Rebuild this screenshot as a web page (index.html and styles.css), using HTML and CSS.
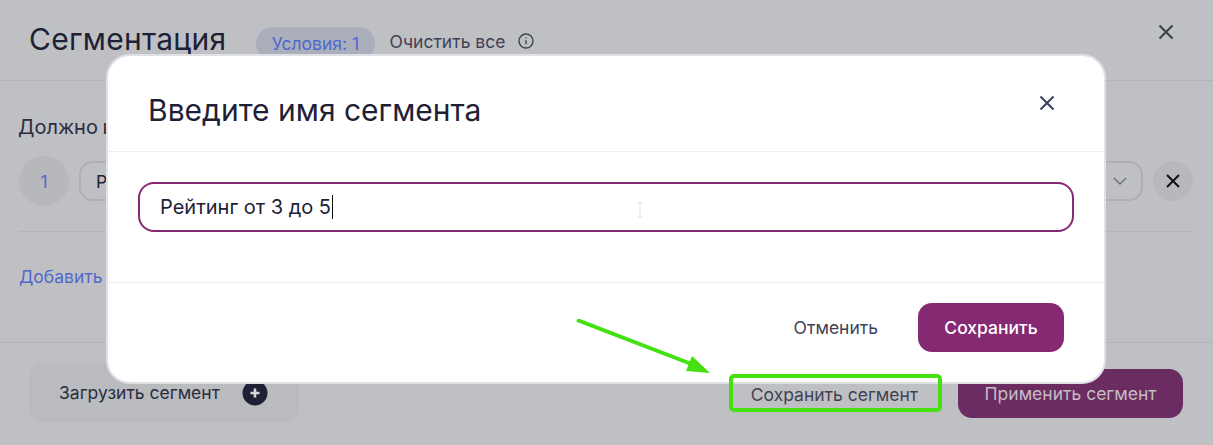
FILE: index.html
```html
<!DOCTYPE html>
<html lang="ru">
<head>
<meta charset="utf-8">
<title>Сегментация</title>
<link rel="stylesheet" href="styles.css">
</head>
<body>
<div class="page">
  <header class="top">
    <h1 class="top-title">Сегментация</h1>
    <span class="pill">Условия: 1</span>
    <span class="clear">Очистить все</span>
    <svg class="info" width="16" height="16" viewBox="0 0 16 16" fill="none" stroke="#3f4254" stroke-width="1.4"><circle cx="8" cy="8" r="7"/><path d="M8 7.2v4" /><path d="M8 4.4v1.2"/></svg>
    <svg class="top-close" width="16" height="16" viewBox="0 0 16 16" fill="none" stroke="#3f4254" stroke-width="2.2"><path d="M1.5 1.5l13 13M14.5 1.5l-13 13"/></svg>
  </header>
  <section class="rules">
    <div class="rules-label">Должно иметь</div>
    <div class="rule">
      <span class="num">1</span>
      <div class="select">
        <span>Рейтинг</span>
        <svg width="14" height="8" viewBox="0 0 14 8" fill="none" stroke="#6c6e7e" stroke-width="1.4"><path d="M1 1l6 6 6-6"/></svg>
      </div>
      <span class="remove">
        <svg width="14" height="14" viewBox="0 0 14 14" fill="none" stroke="#111" stroke-width="2"><path d="M1 1l12 12M13 1L1 13"/></svg>
      </span>
    </div>
    <a class="add">Добавить условие</a>
  </section>
  <footer class="bottom">
    <div class="load">
      <span>Загрузить сегмент</span>
      <svg width="26" height="26" viewBox="0 0 26 26"><circle cx="13" cy="13" r="12.5" fill="#1e2136"/><path d="M13 8.5v9M8.5 13h9" stroke="#d8d8dc" stroke-width="2.6"/></svg>
    </div>
    <div class="save-seg">Сохранить сегмент</div>
    <div class="apply">Применить сегмент</div>
  </footer>
</div>

<div class="modal">
  <div class="modal-head">
    <h2 class="modal-title">Введите имя сегмента</h2>
    <svg width="16" height="16" viewBox="0 0 16 16" fill="none" stroke="#3f4660" stroke-width="2.2"><path d="M1.5 1.5l13 13M14.5 1.5l-13 13"/></svg>
  </div>
  <div class="modal-body">
    <div class="field"><span>Рейтинг от 3 до 5</span><i class="caret"></i></div>
  </div>
  <div class="modal-foot">
    <span class="cancel">Отменить</span>
    <span class="save">Сохранить</span>
  </div>
</div>

<svg class="cursor" width="6" height="16" viewBox="0 0 6 16" fill="none" stroke="#dcdcdc" stroke-width="1"><path d="M1 .5h4M3 .5v15M1 15.5h4"/></svg>
<svg class="arrow" width="140" height="60" viewBox="0 0 140 60"><path d="M1 1L118 46" stroke="#44e010" stroke-width="4" fill="none"/><path d="M134 54L110 52L116 37Z" fill="#44e010"/></svg>
<div class="mark"></div>
</body>
</html>
```
FILE: styles.css
```css
* { box-sizing: border-box; }
html, body { margin: 0; padding: 0; height: 100%; }
body {
  background: #bfc0c4;
  font-family: Inter, "Noto Sans", "Liberation Sans", sans-serif;
  color: #1e2136;
  overflow: hidden;
  position: relative;
}
.page { display: flex; flex-direction: column; height: 445px; }

.top {
  height: 81px;
  flex: none;
  display: flex;
  align-items: center;
  padding: 0 39px 2px 29px;
  border-bottom: 1px solid #b3b4b9;
}
.top-title { margin: 0 30px 0 0; font-size: 30px; font-weight: 400; line-height: 36px; letter-spacing: .27px; color: #1e2136; }
.pill {
  height: 33px;
  padding: 0 15.5px;
  border-radius: 17px;
  background: #abaebb;
  color: #4f69cc;
  font-size: 17.5px;
  line-height: 33px;
  margin-top: 8px;
}
.clear { margin-left: 15px; font-size: 17.5px; color: #3f4254; margin-top: 4px; }
.info { margin-left: 13px; margin-top: 4px; }
.top-close { margin-left: auto; margin-bottom: 14px; }

.rules { flex: 1; padding: 32px 20px 0 19px; }
.rules-label { font-size: 20px; line-height: 28px; color: #2a2d40; word-spacing: -1px; margin-left: -1px; }
.rule {
  display: flex;
  align-items: center;
  gap: 10px;
  margin-top: 15px;
  padding-bottom: 25px;
  border-bottom: 1px solid #b3b4b9;
}
.num {
  width: 50px;
  height: 50px;
  border-radius: 50%;
  background: #b7b8bc;
  color: #4f69cc;
  font-size: 17.5px;
  display: flex;
  align-items: center;
  justify-content: center;
  flex: none;
}
.select {
  flex: 1;
  height: 40px;
  border: 2px solid #aeafb8;
  border-radius: 14px;
  display: flex;
  align-items: center;
  justify-content: space-between;
  padding: 0 14px 0 15px;
  font-size: 17.5px;
}
.remove {
  width: 40px;
  height: 40px;
  border-radius: 50%;
  background: #b7b8bc;
  display: flex;
  align-items: center;
  justify-content: center;
  flex: none;
}
.add { display: block; margin-top: 33px; font-size: 17.5px; line-height: 24px; color: #4f69cc; }

.bottom {
  height: 103px;
  flex: none;
  border-top: 1px solid #b3b4b9;
  display: flex;
  align-items: flex-start;
  padding: 20px 30px 0 29px;
}
.load {
  width: 270px;
  height: 59px;
  background: #babbbf;
  border-radius: 14px;
  display: flex;
  align-items: center;
  gap: 22px;
  padding-left: 30px;
  font-size: 17.5px;
  color: #2a2d40;
}
.save-seg {
  margin: 21px 0 0 auto;
  font-size: 17.5px;
  line-height: 21px;
  color: #3f4254;
}
.apply {
  margin: 6px 0 0 40px;
  width: 225px;
  height: 49px;
  border-radius: 14px;
  background: #6a2c61;
  color: #c6bcc5;
  font-size: 17.5px;
  display: flex;
  align-items: center;
  justify-content: center;
}

.modal {
  position: absolute;
  left: 106px;
  top: 54px;
  width: 1000px;
  height: 330px;
  background: #fff;
  border: 2px solid #dfe1e7;
  border-radius: 24px;
  display: flex;
  flex-direction: column;
}
.modal-head {
  height: 96px;
  flex: none;
  display: flex;
  align-items: center;
  justify-content: space-between;
  padding: 0 49px 0 40px;
  border-bottom: 1px solid #eceef1;
}
.modal-head svg { margin-top: -2px; }
.modal-title { margin: 12px 0 0; font-size: 30px; font-weight: 400; line-height: 36px; color: #1e2136; }
.modal-body { height: 131px; flex: none; padding: 30px 30px 0; border-bottom: 1px solid #eceef1; }
.field {
  height: 50px;
  border: 2px solid #862973;
  border-radius: 16px;
  display: flex;
  align-items: center;
  padding-left: 20px;
  font-size: 20px;
  color: #1e2136;
}
.caret { display: block; width: 1px; height: 24px; background: #111; margin-left: 1px; }
.modal-foot {
  flex: 1;
  display: flex;
  align-items: flex-start;
  justify-content: flex-end;
  padding: 20px 40px 0 0;
}
.cancel { font-size: 17.5px; line-height: 50px; color: #3f4254; margin-right: 40px; }
.save {
  width: 146px;
  height: 49px;
  border-radius: 14px;
  background: #862973;
  color: #fff;
  font-size: 17.5px;
  font-weight: 500;
  display: flex;
  align-items: center;
  justify-content: center;
}
.cursor { position: absolute; left: 637px; top: 202px; }
.arrow { position: absolute; left: 576px; top: 319px; }
.mark {
  position: absolute;
  left: 729px;
  top: 374px;
  width: 213px;
  height: 38px;
  border: 4px solid #44e010;
  border-radius: 5px;
}
```
